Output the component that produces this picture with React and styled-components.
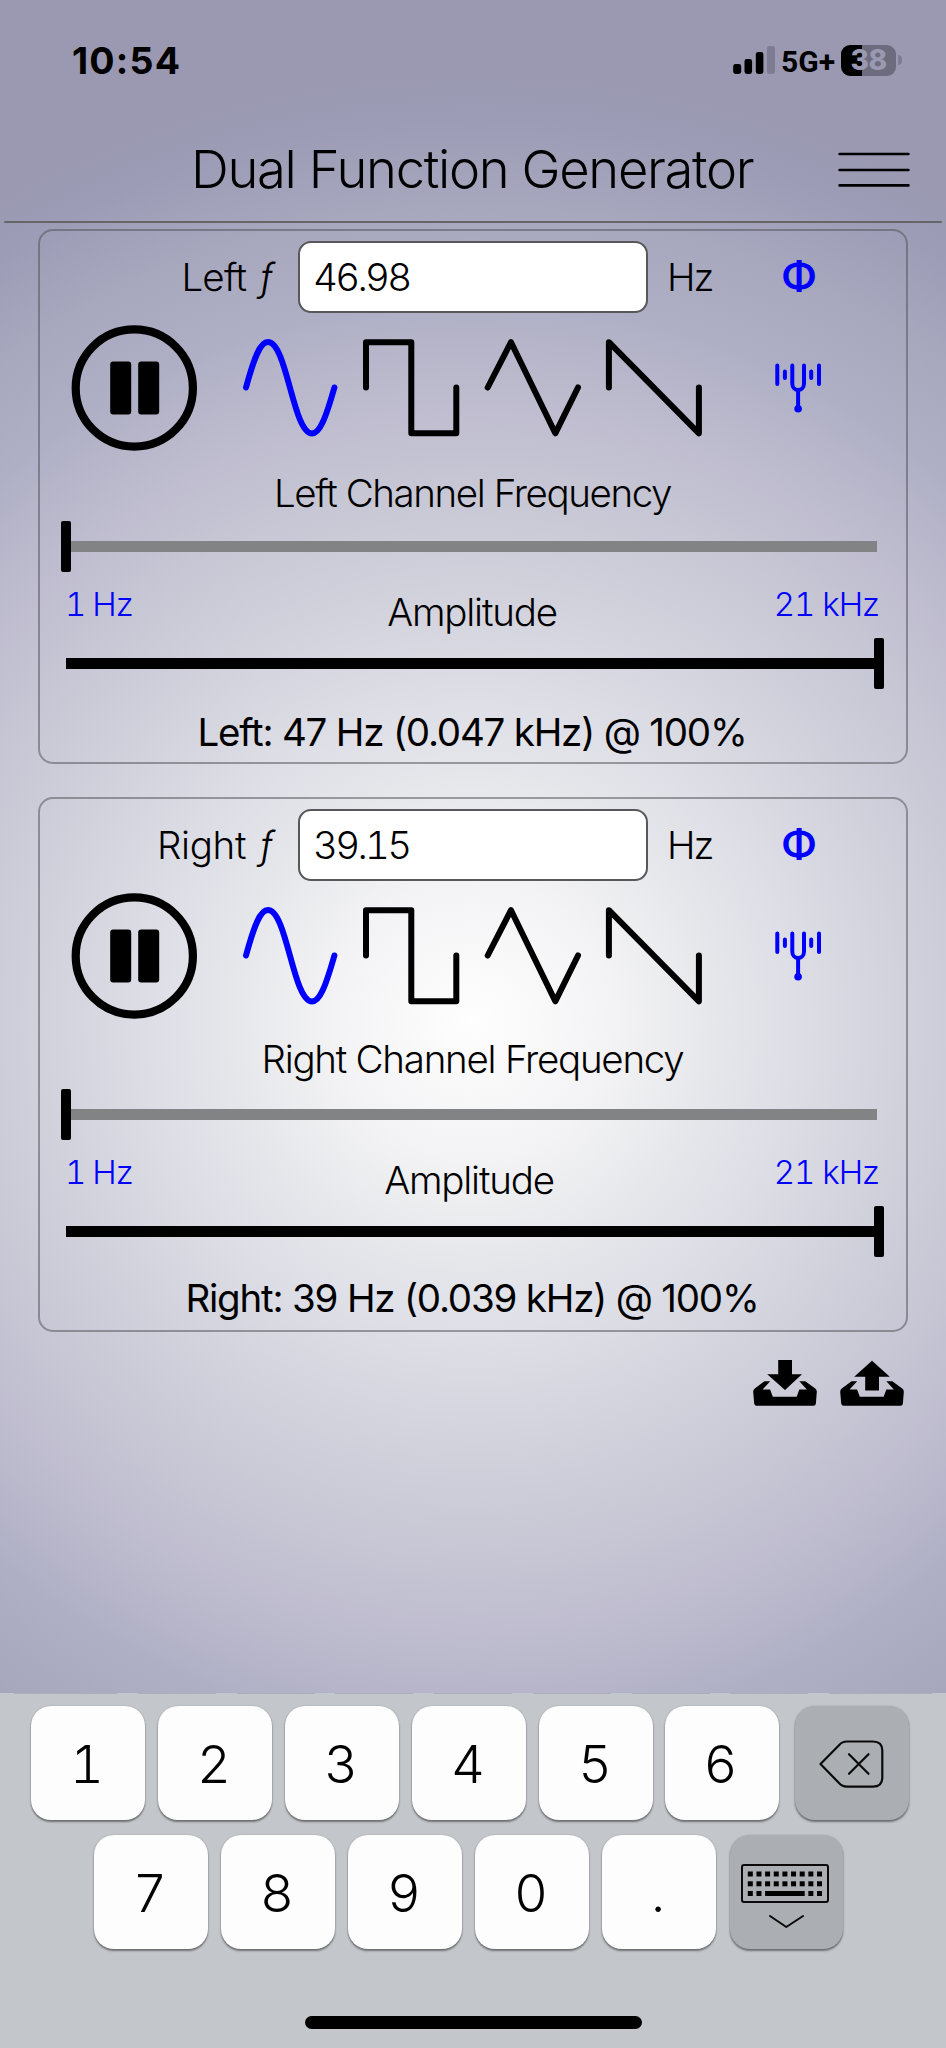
import React from "react";
import styled, { createGlobalStyle } from "styled-components";

const BLUE = "#0000ff";

const GlobalStyle = createGlobalStyle`
  * { box-sizing: border-box; }
  html, body { margin: 0; padding: 0; }
  body { width: 946px; overflow-x: hidden; }
  button { border: 0; padding: 0; margin: 0; background: none; color: inherit; font: inherit; display: block; }
  svg { display: block; }
`;

const Screen = styled.div`
  width: 946px;
  height: 2048px;
  overflow: hidden;
  display: flex;
  flex-direction: column;
  color: #000;
  font-family: Inter, "Liberation Sans", sans-serif;
  font-weight: 300;
  background: radial-gradient(
    circle 1000px at 473px 1020px,
    #fefefe 0%,
    #f3f3f5 14%,
    #e5e6ea 25%,
    #dedee7 32%,
    #d5d5df 40%,
    #cdcdd9 47.5%,
    #c5c4d3 55.5%,
    #bfbdcf 61%,
    #b8b6ca 66.5%,
    #afb0c6 71.5%,
    #a7a7be 81%,
    #9d9cb6 90%,
    #9a99b1 95%
  );
`;

const StatusBar = styled.header`
  height: 120px;
  padding: 0 44px 0 72px;
  display: flex;
  align-items: center;
  justify-content: space-between;
`;

const Clock = styled.span`
  padding-top: 2px;
  font-size: 37.5px;
  line-height: 44px;
  font-weight: 700;
  letter-spacing: 1.2px;
`;

const StatusIcons = styled.div`
  display: flex;
  align-items: center;
`;

const Network = styled.span`
  width: 60px;
  margin-left: 5px;
  padding-top: 3px;
  font-family: Roboto, sans-serif;
  font-weight: 700;
  font-size: 30px;
  line-height: 30px;
  letter-spacing: 0.1px;
`;

const Battery = styled.div`
  width: 55px;
  height: 31px;
  border-radius: 9px;
  background: linear-gradient(to right, #000 21px, #6d6c7f 21px);
  color: #9a99b1;
  font-weight: 800;
  font-size: 28px;
  line-height: 31px;
  letter-spacing: -0.4px;
  text-align: center;
`;

const BatteryTip = styled.i`
  width: 4px;
  height: 10px;
  margin-left: 2px;
  border-radius: 0 5px 5px 0;
  background: #7d7c92;
`;

const TitleBar = styled.div`
  height: 101px;
  padding: 0 36.5px 3px 191px;
  display: flex;
  align-items: center;
  justify-content: space-between;
`;

const Title = styled.h1`
  margin: 0;
  font-size: 52.5px;
  line-height: 98px;
  font-weight: 300;
  letter-spacing: -1.35px;
  white-space: nowrap;
`;

const MenuButton = styled.button`
  && { padding-top: 2px; }
`;

const Divider = styled.hr`
  width: 938px;
  height: 2px;
  flex: none;
  margin: 0 4px 6px;
  border: 0;
  border-radius: 1px;
  background: #66666a;
`;

const Channels = styled.main`
  padding: 0 38px;
  display: flex;
  flex-direction: column;
  gap: 33px;
`;

const Panel = styled.section`
  height: 535px;
  padding: 9.5px 25px 0 19px;
  border: 2px solid rgba(80, 80, 86, 0.52);
  border-radius: 15px;
`;

const EntryRow = styled.div`
  height: 72px;
  display: grid;
  grid-template-columns: 217px 350px 69px 76px;
  column-gap: 22px;
  align-items: center;
  font-size: 38.5px;
  line-height: 72px;
`;

const EntryLabel = styled.label`
  padding-right: 3px;
  display: flex;
  justify-content: flex-end;
  gap: 13px;
  letter-spacing: ${(p) => p.$tracking}px;
  white-space: nowrap;
`;

const Symbol = styled.em`
  font-style: italic;
  letter-spacing: 0;
`;

const Field = styled.input`
  width: 350px;
  height: 72px;
  padding: 0 13px;
  border: 2px solid #58585a;
  border-radius: 13px;
  outline: 0;
  background: #fff;
  color: #000;
  font: inherit;
  font-variant-numeric: tabular-nums;
  letter-spacing: -2.7px;
`;

const Unit = styled.span`
  margin-left: -3px;
  letter-spacing: -2px;
`;

const PhaseButton = styled.button`
  && { font-size: 40px; }
  color: ${BLUE};
  font-weight: 600;
  line-height: 72px;
  text-align: center;
`;

const WaveRow = styled.div`
  height: 126px;
  margin-top: 12px;
  padding-left: 12px;
  display: flex;
  align-items: center;
`;

const WaveSet = styled.div`
  margin-left: 45px;
  display: flex;
  gap: 20.3px;
`;

const WaveButton = styled.button`
  color: ${(p) => (p.$active ? BLUE : "#000")};
`;

const ForkButton = styled.button`
  margin-left: 71.5px;
  color: ${BLUE};
`;

const Caption = styled.div`
  height: 40px;
  margin-top: ${(p) => 22 - p.$lift}px;
  margin-bottom: ${(p) => 8 + p.$lift}px;
  padding-left: 5px;
  font-size: 38.5px;
  line-height: 40px;
  letter-spacing: ${(p) => p.$tracking}px;
  text-align: center;
  white-space: nowrap;
`;

const Slider = styled.div`
  height: 52px;
  padding: 0 0 0 7px;
  display: flex;
  align-items: center;
  justify-content: ${(p) => (p.$full ? "flex-end" : "flex-start")};
`;

const Track = styled.div`
  width: 811px;
  height: 11.5px;
  flex: none;
  background: ${(p) => (p.$full ? "#000" : "#828384")};
`;

const Thumb = styled.div`
  width: 9.5px;
  height: 51.5px;
  flex: none;
  margin-left: ${(p) => (p.$full ? -3 : -5)}px;
  margin-right: ${(p) => (p.$full ? 0 : -4.5)}px;
  position: relative;
  border-radius: 2px;
  background: #000;
`;

const ScaleRow = styled.div`
  height: 65px;
  padding: 0 2px 0 6px;
  display: grid;
  grid-template-columns: 1fr auto 1fr;
  align-items: start;
`;

const Limit = styled.span`
  padding-top: 1px;
  color: ${BLUE};
  font-size: 33px;
  line-height: 60px;
  font-variant-numeric: tabular-nums;
  letter-spacing: -1px;
  word-spacing: ${(p) => p.$gap}px;
  text-align: ${(p) => p.$align};
`;

const ScaleName = styled.span`
  padding-right: ${(p) => p.$lift * 2}px;
  margin-left: ${(p) => p.$lift * -1}px;
  font-size: 38.5px;
  line-height: 78px;
  letter-spacing: -1.2px;
`;

const Readout = styled.div`
  height: 45px;
  margin-top: ${(p) => 20 - p.$lift}px;
  padding-left: 4px;
  font-size: 38.5px;
  font-weight: 400;
  line-height: 45px;
  letter-spacing: -1.2px;
  text-align: center;
  white-space: nowrap;
`;

const Transfers = styled.div`
  padding: 28px 42px 0 0;
  display: flex;
  justify-content: flex-end;
  gap: 23px;
`;

const Keyboard = styled.footer`
  height: 355px;
  margin-top: auto;
  display: flex;
  flex-direction: column;
  align-items: center;
  background: #c3c6cb;
`;

const HiddenKeys = styled.div`
  width: 918px;
  height: 1px;
  margin-bottom: 12px;
  display: flex;
  justify-content: space-between;
`;

const HiddenKey = styled.i`
  width: ${(p) => (p.$wide ? 103 : 78)}px;
  height: 1px;
  background: #adafb4;
`;

const KeyRow = styled.div`
  width: 100%;
  height: 114px;
  margin-bottom: 15px;
  padding-left: ${(p) => p.$indent}px;
  display: flex;
  gap: 13px;
`;

const Key = styled.button`
  && {
    display: flex;
    padding: ${(p) => p.$inset || "2px 2px 0 0"};
  }
  width: ${(p) => p.$width || 114}px;
  height: 114px;
  flex: none;
  align-items: center;
  justify-content: center;
  margin-left: ${(p) => p.$shift || 0}px;
  border-radius: 20px;
  background: ${(p) => (p.$dark ? "#abaeb3" : "#fdfdfd")};
  box-shadow: 0 2px 2px rgba(0, 0, 0, 0.42), 0 0 2px rgba(0, 0, 0, 0.18);
  && { font-size: 52.5px; }
  font-variant-numeric: tabular-nums;
  line-height: 112px;
`;

const HomeBar = styled.div`
  width: 337px;
  height: 12.5px;
  margin-top: 52px;
  border-radius: 7px;
  background: #000;
`;

const SignalIcon = () => (
  <svg width="43" height="28" viewBox="0 0 43 28">
    <rect x="0.2" y="18" width="8" height="10" rx="2.4" />
    <rect x="11.5" y="13" width="7.6" height="15" rx="2.4" />
    <rect x="22.8" y="6" width="7.6" height="22" rx="2.4" />
    <rect x="34" y="0" width="8" height="28" rx="2.4" fill="#7d7c92" />
  </svg>
);

const MenuIcon = () => (
  <svg width="72" height="36" viewBox="0 0 72 36" stroke="#000" strokeWidth="2.7" strokeLinecap="round">
    <path d="M1.6 2H70.4M1.6 18H70.4M1.6 33.4H70.4" />
  </svg>
);

const PauseIcon = () => (
  <svg width="126" height="126" viewBox="0 0 126 126">
    <circle cx="63.3" cy="63" r="58.6" fill="none" stroke="#000" strokeWidth="8.2" />
    <rect x="39.2" y="36.5" width="21" height="53" rx="3" />
    <rect x="67.2" y="36.5" width="21" height="53" rx="3" />
  </svg>
);

const WAVES = [
  { name: "Sine", d: "M4 49.5C12 20 18 4 26 4C45 4 51 95.5 70 95.5C78 95.5 84 79 92.4 49.5" },
  { name: "Square", d: "M4 49.5V4.2H49.3V95.3H94.3V49.5" },
  { name: "Triangle", d: "M4.7 49.5L28 4.2L72.3 95.3L95 49.5" },
  { name: "Sawtooth", d: "M5.9 49.5V4.2L95.9 95.3V49.5" },
];

const WaveIcon = ({ d }) => (
  <svg width="100" height="100" viewBox="0 0 100 100" fill="none" stroke="currentColor" strokeWidth="6" strokeLinecap="round" strokeLinejoin="round">
    <path d={d} />
  </svg>
);

const ForkIcon = () => (
  <svg width="48" height="50" viewBox="0 0 48 50" fill="none" stroke="currentColor" strokeWidth="4" strokeLinecap="round">
    <path d="M3.3 2.5V21M10.9 8.5V15M37.2 8.5V15M45 2.5V21M18.3 2.5V20.5C18.3 29.3 30 29.3 30 20.5V2.5M24.1 28V46" />
    <circle cx="24.1" cy="45.7" r="3.8" fill="currentColor" stroke="none" />
  </svg>
);

const Tray = ({ children }) => (
  <svg width="64" height="46" viewBox="0 0 64 46">
    <path d="M11.5 21.2H17.2L9.6 29.6H17.1L19.8 36.8H43.7L46.3 29.6H53.9L46.3 21.2H52.3L62.2 28.6Q64 30 63.8 32L62.9 43.4Q62.7 45.7 60.4 45.7H3.6Q1.5 45.7 1.2 43.4L0.2 32Q0 30 1.8 28.6Z" />
    {children}
  </svg>
);

const LoadIcon = () => (
  <Tray>
    <path d="M25.2 0H39V14.2H49L32 30L14.2 14.2H25.2Z" />
  </Tray>
);

const ShareIcon = () => (
  <Tray>
    <path d="M32 0.8L49.8 16.8H39V30.5H25.2V16.8H14.2Z" />
  </Tray>
);

const DeleteIcon = () => (
  <svg width="65" height="48" viewBox="0 0 65 48" fill="none" stroke="#0a0a0a" strokeWidth="2.2" strokeLinecap="round" strokeLinejoin="round">
    <path d="M1.5 24L20 5.2Q23.2 1.5 28 1.5H54Q63.3 1.5 63.3 10.5V37.5Q63.3 46.7 54 46.7H28Q23.2 46.7 20 43Z" />
    <path d="M30 14.2L49.5 33.8M49.5 14.2L30 33.8" />
  </svg>
);

const columns = Array.from({ length: 9 }, (_, i) => 6.8 + i * 8.65);

const DismissIcon = () => (
  <svg width="88" height="64" viewBox="0 0 88 64">
    <g fill="none" stroke="#0a0a0a" strokeWidth="2" strokeLinecap="round" strokeLinejoin="round">
      <rect x="1" y="1" width="86" height="37" rx="2" />
      <path d="M29 52L45.3 63L62 52" />
    </g>
    {columns.map((x) => (
      <React.Fragment key={x}>
        <rect x={x} y="7.5" width="5" height="5" />
        <rect x={x} y="17.3" width="5" height="5" />
      </React.Fragment>
    ))}
    {[0, 1, 7, 8].map((i) => (
      <rect key={i} x={columns[i]} y="27" width="5" height="5" />
    ))}
    <rect x={columns[2]} y="27" width="39.6" height="5" />
  </svg>
);

const CHANNELS = [
  {
    side: "Left",
    value: "46.98",
    readout: "Left: 47 Hz (0.047 kHz) @ 100%",
    labelTracking: -0.8,
    captionTracking: -1.4,
    lift: 0,
  },
  {
    side: "Right",
    value: "39.15",
    readout: "Right: 39 Hz (0.039 kHz) @ 100%",
    labelTracking: -0.3,
    captionTracking: -1.25,
    lift: 2,
  },
];

function Channel({ side, value, readout, labelTracking, captionTracking, lift }) {
  return (
    <Panel>
      <EntryRow>
        <EntryLabel $tracking={labelTracking}>
          {side} <Symbol>ƒ</Symbol>
        </EntryLabel>
        <Field defaultValue={value} aria-label={`${side} frequency`} />
        <Unit>Hz</Unit>
        <PhaseButton>Φ</PhaseButton>
      </EntryRow>
      <WaveRow>
        <button aria-label="Pause">
          <PauseIcon />
        </button>
        <WaveSet>
          {WAVES.map((wave, i) => (
            <WaveButton key={wave.name} aria-label={wave.name} $active={i === 0}>
              <WaveIcon d={wave.d} />
            </WaveButton>
          ))}
        </WaveSet>
        <ForkButton aria-label="Tune">
          <ForkIcon />
        </ForkButton>
      </WaveRow>
      <Caption $tracking={captionTracking} $lift={lift}>
        {side} Channel Frequency
      </Caption>
      <Slider>
        <Thumb />
        <Track />
      </Slider>
      <ScaleRow>
        <Limit $align="left" $gap={-1}>1 Hz</Limit>
        <ScaleName $lift={lift}>Amplitude</ScaleName>
        <Limit $align="right" $gap={0}>21 kHz</Limit>
      </ScaleRow>
      <Slider>
        <Track $full />
        <Thumb $full />
      </Slider>
      <Readout $lift={lift}>{readout}</Readout>
    </Panel>
  );
}

export default function App() {
  return (
    <Screen>
      <GlobalStyle />
      <StatusBar>
        <Clock>10:54</Clock>
        <StatusIcons>
          <SignalIcon />
          <Network>5G+</Network>
          <Battery>38</Battery>
          <BatteryTip />
        </StatusIcons>
      </StatusBar>
      <TitleBar>
        <Title>Dual Function Generator</Title>
        <MenuButton aria-label="Menu">
          <MenuIcon />
        </MenuButton>
      </TitleBar>
      <Divider />
      <Channels>
        {CHANNELS.map((channel) => (
          <Channel key={channel.side} {...channel} />
        ))}
      </Channels>
      <Transfers>
        <button aria-label="Load">
          <LoadIcon />
        </button>
        <button aria-label="Share">
          <ShareIcon />
        </button>
      </Transfers>
      <Keyboard>
        <HiddenKeys>
          {Array.from({ length: 9 }, (_, i) => (
            <HiddenKey key={i} $wide={i === 0 || i === 8} />
          ))}
        </HiddenKeys>
        <KeyRow $indent={31}>
          {["1", "2", "3", "4", "5"].map((k) => (
            <Key key={k}>{k}</Key>
          ))}
          <Key $shift={-1.5}>6</Key>
          <Key $dark $shift={3.5} $inset="2px 2px 0 0" aria-label="Delete">
            <DeleteIcon />
          </Key>
        </KeyRow>
        <KeyRow $indent={94}>
          {["7", "8", "9", "0", "."].map((k) => (
            <Key key={k}>{k}</Key>
          ))}
          <Key $dark $shift={1} $width={113} $inset="7px 3px 0 0" aria-label="Dismiss keyboard">
            <DismissIcon />
          </Key>
        </KeyRow>
        <HomeBar />
      </Keyboard>
    </Screen>
  );
}
